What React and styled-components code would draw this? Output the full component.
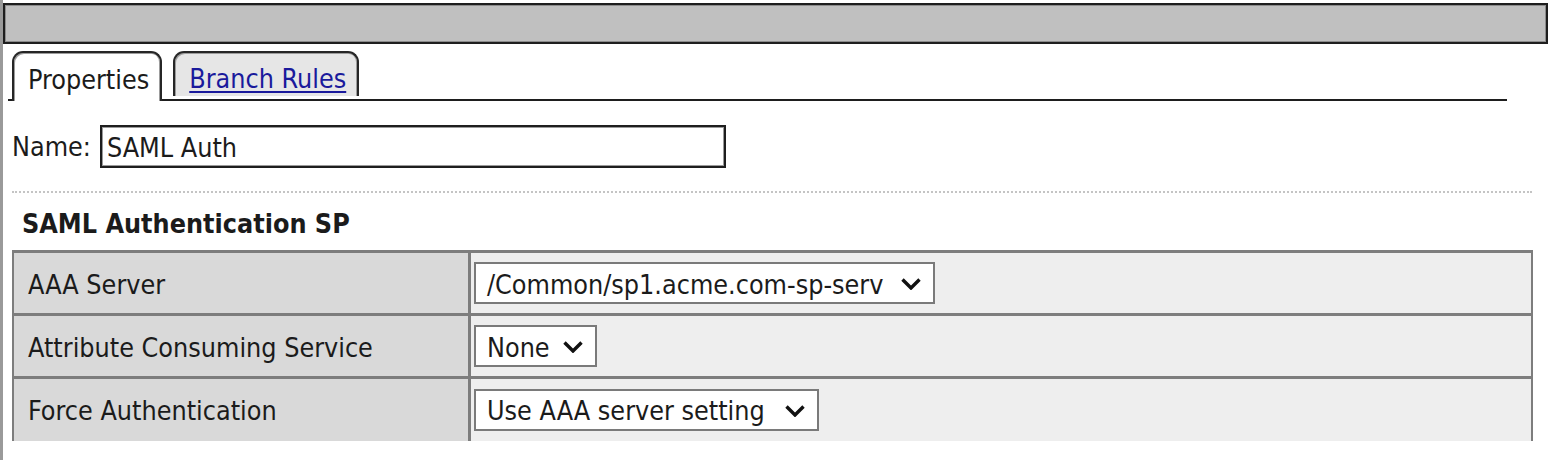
import styled, { createGlobalStyle } from 'styled-components';

const GlobalStyle = createGlobalStyle`
    html, body {
        margin: 0;
        padding: 0;
        background: #ffffff;
    }
    body {
        font-family: "DejaVu Sans", Tahoma, "Liberation Sans", sans-serif;
        font-stretch: condensed;
        font-size: 26.7px;
        color: #1b1b1b;
    }
`

const Page = styled.div`
    width: 1548px;
    height: 460px;
    box-sizing: border-box;
    border-left: 3px solid #9a9a9a;
    padding-top: 3px;
    overflow: hidden;
`

const HeaderBar = styled.div`
    height: 41px;
    box-sizing: border-box;
    border: 2px solid #1e1e1e;
    box-shadow: inset 0 0 0 1px #8c8c8c;
    background: #c0c0c0;
`

const TabBar = styled.div`
    display: flex;
    align-items: flex-end;
    width: 1499px;
    margin: 7px 0 0 5px;
    padding-left: 4px;
    box-sizing: border-box;
    border-bottom: 2px solid #1e1e1e;
`

const Tab = styled.div`
    display: flex;
    align-items: center;
    box-sizing: border-box;
    height: ${props => props.$active ? '50px' : '45px'};
    margin-bottom: ${props => props.$active ? '-2px' : '3px'};
    margin-right: 11px;
    padding: 0 11px 0 14px;
    border: 2px solid #262626;
    border-bottom: none;
    border-radius: 11px 11px 0 0;
    box-shadow: inset 1px 1px 0 #9c9c9c, inset -1px 0 0 #9c9c9c;
    background: ${props => props.$active ? '#ffffff' : '#e6e6e6'};
    padding-top: ${props => props.$active ? '4px' : '7px'};
`

const TabLink = styled.a`
    color: #1a1a9c;
    text-decoration: underline;
    text-underline-offset: 3px;
    text-decoration-thickness: 2px;
`

const NameRow = styled.div`
    display: flex;
    align-items: center;
    gap: 9px;
    margin: 24px 0 0 9px;
`

const NameInput = styled.div`
    width: 626px;
    height: 43px;
    box-sizing: border-box;
    border: 2px solid #1e1e1e;
    box-shadow: inset 0 0 0 1px #9a9a9a;
    padding: 2px 0 0 5px;
    display: flex;
    align-items: center;
`

const Divider = styled.div`
    margin: 23px 0 0 9px;
    width: 1520px;
    border-top: 2px dotted #c4c4c4;
`

const SectionTitle = styled.div`
    margin: 9px 0 0 19px;
    font-weight: 700;
    height: 42px;
    display: flex;
    align-items: center;
`

const Table = styled.table`
    margin: 6px 0 0 9px;
    width: 1521px;
    border-collapse: collapse;
`

const Row = styled.tr`
    height: 63px;
    border-top: 3px solid #7d7d7d;
`

const LabelCell = styled.td`
    width: 440px;
    padding: 2px 0 0 14px;
    background: #d9d9d9;
    border-left: 2px solid #7d7d7d;
    border-right: 3px solid #7d7d7d;
`

const ValueCell = styled.td`
    padding: 0 0 0 3px;
    background: #eeeeee;
    border-right: 2px solid #7d7d7d;
`

const SelectBox = styled.div`
    display: inline-flex;
    align-items: center;
    justify-content: space-between;
    box-sizing: border-box;
    height: 42px;
    padding: 2px 12px 0 11px;
    background: #ffffff;
    border: 2px solid #7a7a7a;
    vertical-align: middle;
`

const Chevron = () => (
    <svg width="20" height="12" viewBox="0 0 20 12">
        <path d="M1.5 1.5 L10 10 L18.5 1.5" fill="none" stroke="#111" strokeWidth="3.4" />
    </svg>
)

const rows = [
    { label: 'AAA Server', value: '/Common/sp1.acme.com-sp-serv', width: 461 },
    { label: 'Attribute Consuming Service', value: 'None', width: 123 },
    { label: 'Force Authentication', value: 'Use AAA server setting', width: 345 },
]

const App = () => {
    return (
        <Page>
            <GlobalStyle />
            <HeaderBar />
            <TabBar>
                <Tab $active>Properties</Tab>
                <Tab><TabLink href="#">Branch Rules</TabLink></Tab>
            </TabBar>
            <NameRow>
                <span>Name:</span>
                <NameInput>SAML Auth</NameInput>
            </NameRow>
            <Divider />
            <SectionTitle>SAML Authentication SP</SectionTitle>
            <Table>
                <tbody>
                    {rows.map(item => (
                        <Row key={item.label}>
                            <LabelCell>{item.label}</LabelCell>
                            <ValueCell>
                                <SelectBox style={{ width: item.width }}>
                                    <span>{item.value}</span>
                                    <Chevron />
                                </SelectBox>
                            </ValueCell>
                        </Row>
                    ))}
                </tbody>
            </Table>
        </Page>
    );
}

export default App;
